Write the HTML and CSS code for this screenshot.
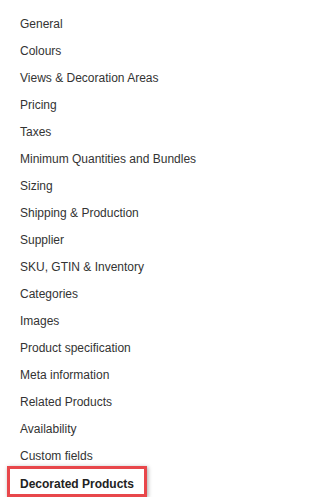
FILE: index.html
```html
<!DOCTYPE html>
<html>
<head>
<meta charset="utf-8">
<link rel="stylesheet" href="styles.css">
</head>
<body>
<ul class="menu">
  <li class="item">General</li>
  <li class="item">Colours</li>
  <li class="item">Views &amp; Decoration Areas</li>
  <li class="item">Pricing</li>
  <li class="item">Taxes</li>
  <li class="item">Minimum Quantities and Bundles</li>
  <li class="item">Sizing</li>
  <li class="item">Shipping &amp; Production</li>
  <li class="item">Supplier</li>
  <li class="item">SKU, GTIN &amp; Inventory</li>
  <li class="item">Categories</li>
  <li class="item">Images</li>
  <li class="item">Product specification</li>
  <li class="item">Meta information</li>
  <li class="item">Related Products</li>
  <li class="item">Availability</li>
  <li class="item">Custom fields</li>
  <li class="item item-active"><span class="highlight">Decorated Products</span></li>
</ul>
</body>
</html>
```

FILE: styles.css
```css
html, body {
  margin: 0;
  padding: 0;
  background: #ffffff;
}

body {
  font-family: "Liberation Sans", Arial, sans-serif;
  font-size: 12px;
  color: #333333;
}

.menu {
  list-style: none;
  margin: 0;
  padding: 11px 0 0 20px;
}

.item {
  line-height: 27px;
  height: 27px;
  white-space: nowrap;
}

.item-active {
  margin-top: -4px;
  margin-left: -13px;
  height: auto;
  line-height: 20px;
}

.highlight {
  display: inline-block;
  border: 3px solid #e8474b;
  padding: 5px 10px 0 10px;
  font-weight: bold;
  color: #222222;
  box-shadow: 1px 1px 4px rgba(0, 0, 0, 0.35);
}
```
